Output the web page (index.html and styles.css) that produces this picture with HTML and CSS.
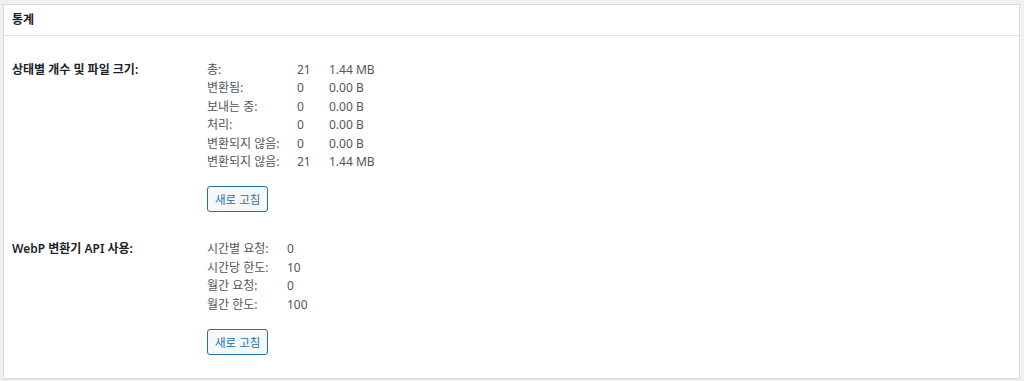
FILE: index.html
```html
<!DOCTYPE html>
<html lang="ko">
<head>
  <meta charset="UTF-8">
  <title>통계</title>
  <link rel="stylesheet" href="styles.css">
</head>
<body>
  <div class="postbox">
    <h2 class="hndle">통계</h2>
    <div class="inside">
      <div class="row">
        <div class="th">상태별 개수 및 파일 크기:</div>
        <div class="td">
          <div class="stats stats-size">
            <span>총:</span><span>21</span><span>1.44 MB</span>
            <span>변환됨:</span><span>0</span><span>0.00 B</span>
            <span>보내는 중:</span><span>0</span><span>0.00 B</span>
            <span>처리:</span><span>0</span><span>0.00 B</span>
            <span>변환되지 않음:</span><span>0</span><span>0.00 B</span>
            <span>변환되지 않음:</span><span>21</span><span>1.44 MB</span>
          </div>
          <button class="button">새로 고침</button>
        </div>
      </div>
      <div class="row">
        <div class="th">WebP 변환기 API 사용:</div>
        <div class="td">
          <div class="stats stats-api">
            <span>시간별 요청:</span><span>0</span>
            <span>시간당 한도:</span><span>10</span>
            <span>월간 요청:</span><span>0</span>
            <span>월간 한도:</span><span>100</span>
          </div>
          <button class="button">새로 고침</button>
        </div>
      </div>
    </div>
  </div>
</body>
</html>
```

FILE: styles.css
```css
body{margin:0;padding:4px 4px 3px 3px;background:#f0f0f1;color:#50575e;font-family:"Segoe UI","Noto Sans","Noto Sans CJK KR",sans-serif;font-size:12px}
.postbox{background:#fff;border:1px solid #dcdcde;box-shadow:0 1px 1px rgba(0,0,0,.04)}
.hndle{margin:0;height:30px;line-height:30px;padding:0 8px;font-size:12px;font-weight:600;color:#1d2327;border-bottom:1px solid #e4e4e5}
.inside{padding:25px 8px 23px}
.row{display:flex}
.row+.row{margin-top:28px}
.th{width:195px;font-weight:600;color:#1d2327;line-height:18.4px}
.td{flex:1}
.stats{display:grid;line-height:18.4px}
.stats-size{grid-template-columns:90px 32px auto}
.stats-api{grid-template-columns:80px auto}
.stats span{white-space:nowrap}
.button{margin-top:15px;height:26px;padding:0 7px;border:1px solid #2271b1;border-radius:3px;background:#f6f7f7;color:#2271b1;font:inherit;font-size:11.5px;cursor:pointer}
```
